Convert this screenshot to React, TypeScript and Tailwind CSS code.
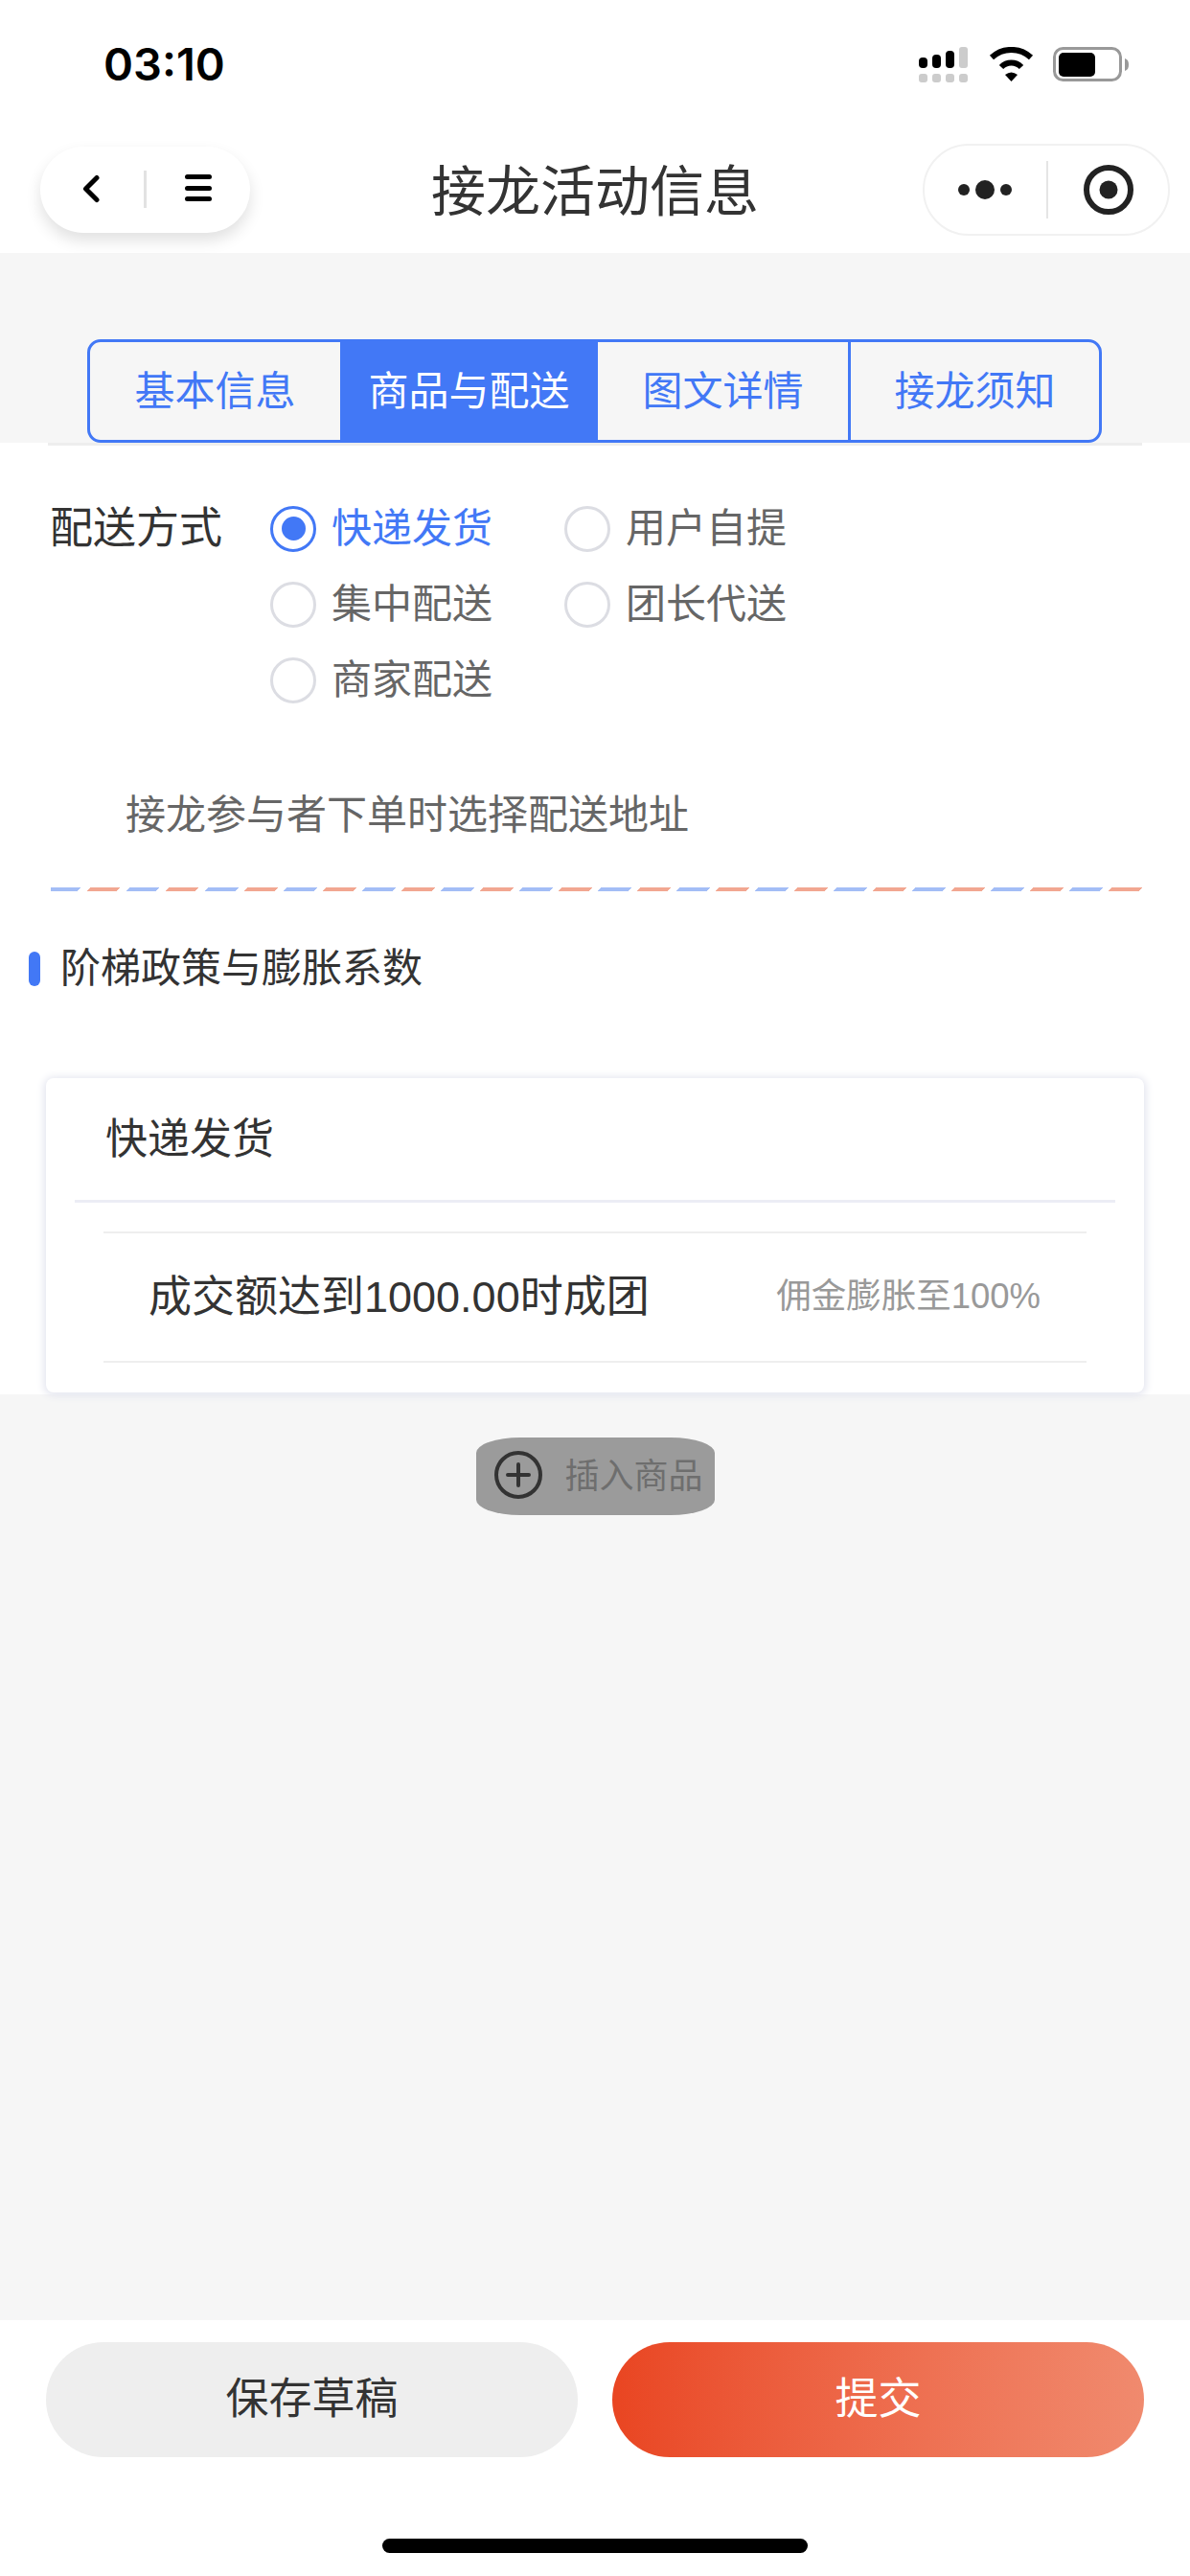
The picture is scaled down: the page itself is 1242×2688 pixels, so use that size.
import React from "react";

const tabs = [
  { label: "基本信息", width: "w-[261px]" },
  { label: "商品与配送", width: "w-[269px]", active: true },
  { label: "图文详情", width: "w-[261px]" },
  { label: "接龙须知", width: "flex-1" },
];

const options = [
  { label: "快递发货", checked: true },
  { label: "用户自提" },
  { label: "集中配送" },
  { label: "团长代送" },
  { label: "商家配送" },
];

const StatusIcons = () => (
  <svg width="222" height="42" viewBox="0 0 222 42" fill="none">
    <rect x="0" y="11" width="9" height="11" rx="4" fill="#000" />
    <rect x="14" y="8" width="9" height="14" rx="4" fill="#000" />
    <rect x="28" y="4" width="9" height="18" rx="4" fill="#000" />
    <rect x="42" y="0" width="9" height="22" rx="3" fill="#ccc" />
    <rect x="0" y="28" width="9" height="9" rx="3" fill="#ccc" />
    <rect x="14" y="28" width="9" height="9" rx="3" fill="#ccc" />
    <rect x="28" y="28" width="9" height="9" rx="3" fill="#ccc" />
    <rect x="42" y="28" width="9" height="9" rx="3" fill="#ccc" />
    <path d="M76 11A30 30 0 0 1 117 11" stroke="#000" strokeWidth="6" />
    <path d="M86 21A14.5 14.5 0 0 1 107 21" stroke="#000" strokeWidth="6" />
    <path d="M90 29Q96.5 24 103 29L96.5 36z" fill="#000" />
    <rect x="141.5" y="1.5" width="69" height="33" rx="9" stroke="#999" strokeWidth="3" />
    <rect x="146" y="6" width="38" height="25" rx="5" fill="#000" />
    <path d="M215 12c3 1 4 3 4 6.500s-1 5.500-4 6.500z" fill="#999" />
  </svg>
);

const Radio = ({ label, checked }: { label: string; checked?: boolean }) => (
  <div className="flex items-center gap-[16px]">
    <span
      className={`flex h-[48px] w-[48px] items-center justify-center rounded-full border-[3px] ${
        checked ? "border-[#4278f6]" : "border-[#dcdde3]"
      }`}
    >
      {checked && <span className="h-[25px] w-[25px] rounded-full bg-[#4278f6]" />}
    </span>
    <span className={`text-[42px] leading-none ${checked ? "text-[#4278f6]" : "text-[#666]"}`}>{label}</span>
  </div>
);

export default function App() {
  return (
    <div className="flex h-[2688px] w-[1242px] flex-col bg-[#f6f6f6] font-['Liberation_Sans','Noto_Sans_CJK_SC',sans-serif]">
      {/* status bar */}
      <div className="flex h-[150px] items-start justify-between bg-white pl-[108px] pr-[61px]">
        <span className="mt-[38px] font-['Inter',sans-serif] text-[47px] font-semibold leading-[58px] text-black">
          03:10
        </span>
        <div className="mt-[49px]">
          <StatusIcons />
        </div>
      </div>

      {/* nav */}
      <div className="grid h-[114px] grid-cols-[1fr_auto_1fr] items-start bg-white px-[21px]">
        <div className="ml-[21px] mt-[3px] flex h-[90px] w-[219px] items-center rounded-[45px] bg-white pl-[44px] shadow-[0_8px_16px_rgba(0,0,0,0.12)]">
          <svg className="mb-[2px]" width="20" height="32" viewBox="0 0 20 32" fill="none">
            <path d="M15 4.500 3.500 16 15 27.500" stroke="#000" strokeWidth="5" strokeLinecap="round" strokeLinejoin="round" />
          </svg>
          <span className="mb-[2px] ml-[44px] h-[39px] w-[3px] bg-[#e2e2e2]" />
          <div className="mb-[4px] ml-[40px] flex w-[28px] flex-col gap-[6.5px]">
            <span className="h-[5px] rounded-full bg-black" />
            <span className="h-[5px] rounded-full bg-black" />
            <span className="h-[5px] rounded-full bg-black" />
          </div>
        </div>
        <span className="mt-[16px] text-[57px] leading-[68px] text-[#333]">接龙活动信息</span>
        <div className="flex h-[96px] w-[258px] items-center justify-self-end rounded-[48px] border-2 border-[#f1f1f1] bg-white">
          <svg className="ml-[35px]" width="68" height="24" viewBox="0 0 68 24" fill="#222">
            <circle cx="6" cy="12" r="6" />
            <circle cx="28" cy="12" r="10" />
            <circle cx="50" cy="12" r="6" />
          </svg>
          <span className="ml-[24px] h-[60px] w-[2px] bg-[#e5e5e5]" />
          <svg className="ml-[37px]" width="52" height="52" viewBox="0 0 52 52" fill="none">
            <circle cx="26" cy="26" r="23" stroke="#222" strokeWidth="6" />
            <circle cx="26" cy="26" r="9.5" fill="#222" />
          </svg>
        </div>
      </div>

      {/* tabs */}
      <div className="flex h-[198px] items-end px-[91px]">
        <div className="flex h-[108px] w-[1059px] overflow-hidden rounded-[14px] border-[3px] border-[#4278f6]">
          {tabs.map((tab, i) => (
            <div
              key={tab.label}
              className={`flex items-center justify-center pt-[2px] text-[42px] leading-none ${tab.width} ${
                tab.active ? "bg-[#4278f6] text-white" : "text-[#4278f6]"
              } ${i === 3 ? "border-l-[3px] border-[#4278f6]" : ""}`}
            >
              {tab.label}
            </div>
          ))}
        </div>
      </div>

      {/* form */}
      <div className="h-[993px] bg-white">
        <div className="mx-[50px] h-[3px] bg-[#eee]" />

        <div className="mt-[47px] flex pl-[52px]">
          <div className="flex h-[79px] w-[230px] items-center text-[45px] leading-none text-[#333]">配送方式</div>
          <div className="grid grid-cols-[307px_306px] auto-rows-[79px] items-center">
            {options.map((o) => (
              <Radio key={o.label} label={o.label} checked={o.checked} />
            ))}
          </div>
        </div>

        <p className="mt-[72px] pl-[131px] text-[42px] leading-[60px] text-[#666]">接龙参与者下单时选择配送地址</p>

        <div className="ml-[53px] mt-[45px] h-[4px] w-[1140px] bg-[repeating-linear-gradient(135deg,#a3bdf6_0,#a3bdf6_22.6px,transparent_22.6px,transparent_29px,#f2a791_29px,#f2a791_51.6px,transparent_51.6px,transparent_58px)]" />

        <div className="mt-[51px] flex h-[60px] items-center pl-[30px]">
          <span className="h-[36px] w-[12px] rounded-full bg-[#4278f6]" />
          <span className="ml-[21px] text-[42px] leading-none text-[#333]">阶梯政策与膨胀系数</span>
        </div>

        <div className="relative ml-[48px] mt-[84px] h-[328px] w-[1146px] rounded-[8px] bg-white shadow-[0_1px_8px_2px_#e2e4ee]">
          <div className="flex h-[127px] items-center pl-[62px] text-[44px] leading-none text-[#333]">快递发货</div>
          <div className="mx-[30px] h-[3px] bg-[#ecedf5]" />
          <div className="mx-[60px] mt-[30px] border-y-2 border-[#eee]">
            <div className="flex h-[133px] items-center justify-between pl-[47px] pr-[48px]">
              <span className="text-[45px] leading-none text-[#333]">成交额达到1000.00时成团</span>
              <span className="text-[36.5px] leading-none text-[#999]">佣金膨胀至100%</span>
            </div>
          </div>
        </div>
      </div>

      {/* insert */}
      <div className="flex flex-1 justify-center pt-[45px]">
        <div className="flex h-[81px] w-[249px] items-center rounded-[46px/16px] bg-[#9b9b9b]">
          <svg className="mb-[4px] ml-[19px]" width="50" height="50" viewBox="0 0 50 50" fill="none">
            <circle cx="25" cy="25" r="23" stroke="#333" strokeWidth="4" />
            <path d="M25 14v22M14 25h22" stroke="#333" strokeWidth="4" strokeLinecap="round" />
          </svg>
          <span className="ml-[24px] text-[36px] leading-none text-[#6e6e6e]">插入商品</span>
        </div>
      </div>

      {/* footer */}
      <div className="flex h-[267px] flex-col bg-white px-[48px] pt-[23px]">
        <div className="flex gap-[36px]">
          <button className="flex h-[120px] w-[555px] items-center justify-center rounded-[60px] bg-[#eee] text-[45px] text-[#333]">
            保存草稿
          </button>
          <button className="flex h-[120px] w-[555px] items-center justify-center rounded-[60px] bg-gradient-to-r from-[#e94521] to-[#f08a6e] text-[45px] text-white">
            提交
          </button>
        </div>
        <div className="mx-auto mt-[85px] h-[15px] w-[444px] rounded-full bg-black" />
      </div>
    </div>
  );
}
